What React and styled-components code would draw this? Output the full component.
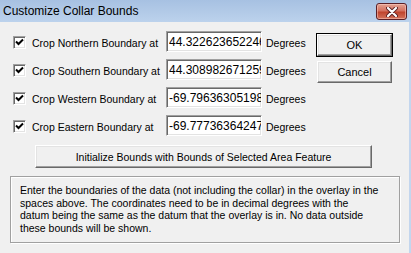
import styled, { createGlobalStyle } from 'styled-components';

const GlobalStyle = createGlobalStyle`
    html, body {
        margin: 0;
        padding: 0;
        background: #f0f0f0;
    }
    * { box-sizing: border-box; }
`;

const Window = styled.div`
    width: 411px;
    height: 253px;
    display: flex;
    flex-direction: column;
    overflow: hidden;
    font-family: "Liberation Sans", Arial, sans-serif;
    font-size: 10.5px;
    color: #000;
`;

const TitleBar = styled.div`
    height: 22px;
    flex: none;
    display: flex;
    align-items: center;
    justify-content: space-between;
    padding: 0 4px 0 3px;
    background: linear-gradient(#a7c1e2, #bcd2ec);
    font-size: 12px;
`;

const CloseButton = styled.div`
    width: 31px;
    height: 17px;
    margin-top: 1px;
    border: 1px solid #5b2026;
    border-radius: 3px;
    background: linear-gradient(#e3a394 0%, #d4715f 45%, #c0452e 55%, #d3735c 100%);
    box-shadow: inset 0 0 0 1px rgba(255, 210, 200, 0.5);
    display: flex;
    align-items: center;
    justify-content: center;
`;

const Body = styled.div`
    flex: 1;
    display: flex;
    flex-direction: column;
    padding: 0 9px 0 10px;
    border-right: 2px solid #c3d6ee;
    background: #f0f0f0;
`;

const TopSection = styled.div`
    display: flex;
    padding: 9px 8px 0 3px;
`;

const FieldList = styled.div`
    display: flex;
    flex-direction: column;
    gap: 7px;
`;

const FieldRow = styled.div`
    display: flex;
    align-items: center;
    height: 21px;
`;

const CheckBox = styled.span`
    width: 13px;
    height: 13px;
    margin: 2px 6px 0 0;
    background: #fff;
    border-top: 1px solid #a0a0a0;
    border-left: 1px solid #a0a0a0;
    border-right: 1px solid #fff;
    border-bottom: 1px solid #fff;
    box-shadow: inset 1px 1px 0 #696969, inset -1px -1px 0 #e3e3e3;
    display: flex;
    align-items: center;
    justify-content: center;
`;

const Label = styled.span`
    width: 134px;
    margin-top: 2px;
    white-space: nowrap;
`;

const TextBox = styled.input`
    width: 96px;
    height: 21px;
    margin: 0;
    padding: 1px 0 0 2px;
    background: #fff;
    border-top: 1px solid #a0a0a0;
    border-left: 1px solid #a0a0a0;
    border-right: 1px solid #fff;
    border-bottom: 1px solid #fff;
    box-shadow: inset 1px 1px 0 #696969, inset -1px -1px 0 #e3e3e3;
    outline: none;
    font-family: "Liberation Sans", Arial, sans-serif;
    font-size: 12px;
    color: #000;
`;

const Unit = styled.span`
    margin: 3px 0 0 4px;
`;

const ButtonColumn = styled.div`
    margin-left: auto;
    padding-top: 3px;
    display: flex;
    flex-direction: column;
    gap: 5px;
`;

const Button = styled.div`
    width: ${p => p.$width || 75}px;
    height: ${p => p.$height || 22}px;
    display: flex;
    align-items: center;
    justify-content: center;
    background: #f0f0f0;
    border-top: 1px solid #fff;
    border-left: 1px solid #fff;
    border-right: 1px solid #696969;
    border-bottom: 1px solid #696969;
    box-shadow: inset -1px -1px 0 #a0a0a0, inset 1px 1px 0 #e3e3e3;
    outline: ${p => p.$default ? '1px solid #000' : 'none'};
    font-size: 11px;
`;

const WideButton = styled(Button)`
    margin: 9px 0 0 25px;
    font-size: 10.5px;
`;

const InfoBox = styled.div`
    margin-top: 8px;
    height: 67px;
    padding: 7px 8px 0 9px;
    border: 1px solid #a0a0a0;
    box-shadow: 1px 1px 0 #fff, inset 1px 1px 0 #fff;
    line-height: 12.5px;
    white-space: nowrap;
`;

const fields = [
    ['Northern', '44.32262365224623'],
    ['Southern', '44.30898267125934'],
    ['Western', '-69.79636305198512'],
    ['Eastern', '-69.77736364247061'],
];

const infoLines = [
    'Enter the boundaries of the data (not including the collar) in the overlay in the',
    'spaces above. The coordinates need to be in decimal degrees with the',
    'datum being the same as the datum that the overlay is in. No data outside',
    'these bounds will be shown.',
];

const Check = () => (
    <svg width="9" height="9" viewBox="0 0 9 9">
        <path d="M1 3.5 L3.5 6 L8 1.5" stroke="#000" strokeWidth="2" fill="none" />
    </svg>
);

export default function App() {
    return (
        <Window>
            <GlobalStyle />
            <TitleBar>
                <span>Customize Collar Bounds</span>
                <CloseButton>
                    <svg width="12" height="10" viewBox="0 0 12 10">
                        <path d="M2 1 L10 9 M10 1 L2 9" stroke="#5a1f22" strokeWidth="4" strokeLinecap="round" />
                        <path d="M2 1 L10 9 M10 1 L2 9" stroke="#fff" strokeWidth="2.2" strokeLinecap="round" />
                    </svg>
                </CloseButton>
            </TitleBar>
            <Body>
                <TopSection>
                    <FieldList>
                        {fields.map(([name, value]) => (
                            <FieldRow key={name}>
                                <CheckBox><Check /></CheckBox>
                                <Label>Crop {name} Boundary at</Label>
                                <TextBox readOnly value={value} />
                                <Unit>Degrees</Unit>
                            </FieldRow>
                        ))}
                    </FieldList>
                    <ButtonColumn>
                        <Button $default>OK</Button>
                        <Button>Cancel</Button>
                    </ButtonColumn>
                </TopSection>
                <WideButton $width={337} $height={23}>
                    Initialize Bounds with Bounds of Selected Area Feature
                </WideButton>
                <InfoBox>
                    {infoLines.map(line => <div key={line}>{line}</div>)}
                </InfoBox>
            </Body>
        </Window>
    );
}
